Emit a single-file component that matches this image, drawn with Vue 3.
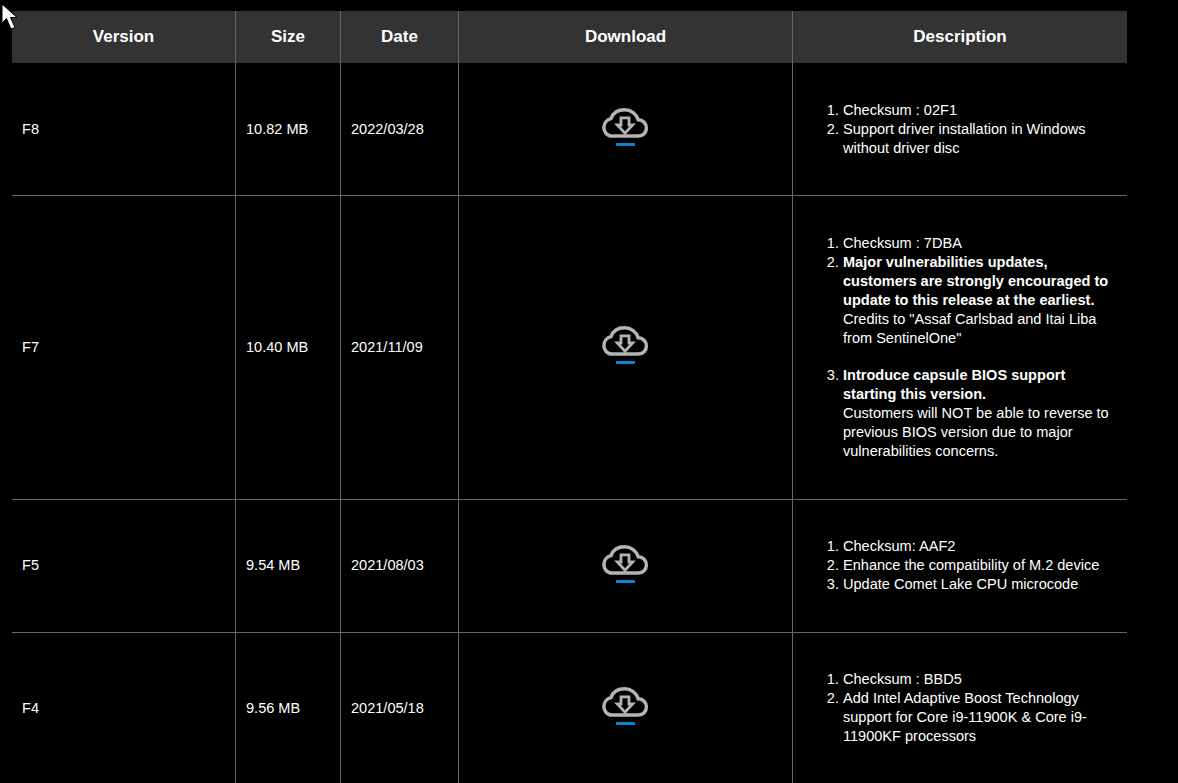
<script setup>
const rows = [
  { v: 'F8', s: '10.82 MB', d: '2022/03/28', k: 'a' },
  { v: 'F7', s: '10.40 MB', d: '2021/11/09', k: 'b' },
  { v: 'F5', s: '9.54 MB', d: '2021/08/03', k: 'c' },
  { v: 'F4', s: '9.56 MB', d: '2021/05/18', k: 'd' }
]
</script>

<template>
  <div class="page">
    <table class="bios">
      <colgroup>
        <col class="c1" /><col class="c2" /><col class="c3" /><col class="c4" /><col class="c5" />
      </colgroup>
      <thead>
        <tr>
          <th>Version</th><th>Size</th><th>Date</th><th>Download</th><th>Description</th>
        </tr>
      </thead>
      <tbody>
        <tr v-for="r in rows" :key="r.v">
          <td>{{ r.v }}</td>
          <td>{{ r.s }}</td>
          <td>{{ r.d }}</td>
          <td>
            <svg class="dl" viewBox="0 0 51 44" width="51" height="44" aria-hidden="true">
              <path d="M12 29 C7 29 3.900 25 3.900 20.800 C3.900 16 7 12.500 11 11.600 C13 6 18 2.800 24.500 2.800 C31 2.800 36.500 7 38.200 12.800 C43 12.800 46.400 16.500 46.400 21 C46.400 25.500 43 29 38.500 29 Z" fill="none" stroke="#b4b4b4" stroke-width="3.500" />
              <path d="M21 10.800 H29 V18 H32.700 L25 26.300 L17.300 18 H21 Z" fill="none" stroke="#b4b4b4" stroke-width="2.800" stroke-linejoin="miter" />
              <rect x="16" y="36" width="19" height="3" fill="#0a85d1" />
            </svg>
          </td>
          <td>
            <ol v-if="r.k === 'a'">
              <li>Checksum : 02F1</li>
              <li>Support driver installation in Windows without driver disc</li>
            </ol>
            <ol v-else-if="r.k === 'b'">
              <li>Checksum : 7DBA</li>
              <li class="gap"><strong>Major vulnerabilities updates, customers are strongly encouraged to update to this release at the earliest.</strong><br />Credits to "Assaf Carlsbad and Itai Liba from SentinelOne"</li>
              <li><strong>Introduce capsule BIOS support starting this version.</strong><br />Customers will NOT be able to reverse to previous BIOS version due to major vulnerabilities concerns.</li>
            </ol>
            <ol v-else-if="r.k === 'c'">
              <li>Checksum: AAF2</li>
              <li>Enhance the compatibility of M.2 device</li>
              <li>Update Comet Lake CPU microcode</li>
            </ol>
            <ol v-else>
              <li>Checksum : BBD5</li>
              <li>Add Intel Adaptive Boost Technology support for Core i9-11900K &amp; Core i9-11900KF processors</li>
            </ol>
          </td>
        </tr>
      </tbody>
    </table>
    <svg class="cursor" viewBox="0 0 20 34" width="20" height="34" aria-hidden="true">
      <path d="M2 4 L2 23 L6.500 18.500 L11 29 L15 27.500 L10.500 17.500 L17 17.500 Z" fill="#fff" stroke="#000" stroke-width="1" />
    </svg>
  </div>
</template>

<style>
html, body { margin: 0; background: #000; overflow: hidden; }
</style>

<style scoped>
.page {
  position: relative;
  height: 783px;
  padding: 11px 0 0 12px;
  box-sizing: border-box;
  overflow: hidden;
  background: #000;
  font-family: "Liberation Sans", Arial, sans-serif;
  color: #fff;
}
.bios {
  width: 1115px;
  table-layout: fixed;
  border-collapse: separate;
  border-spacing: 0;
  font-size: 14.56px;
  line-height: 19px;
}
.c1 { width: 224px; }
.c2 { width: 105px; }
.c3 { width: 118px; }
.c4 { width: 334px; }
.c5 { width: 334px; }
th {
  height: 52px;
  padding: 0 10px 2px;
  background: #333;
  font-size: 17px;
  font-weight: 700;
  text-align: center;
  vertical-align: middle;
  border-right: 1px solid #666;
  box-sizing: border-box;
}
td {
  padding: 37px 10px 38px;
  vertical-align: middle;
  border-right: 1px solid #666;
  border-bottom: 1px solid #666;
}
tbody tr:nth-child(1) td { padding-top: 38px; padding-bottom: 37px; }
tbody tr:nth-child(2) td { padding-top: 38px; padding-bottom: 38px; }
th:last-child, td:last-child { border-right: 0; }
tbody tr td:nth-child(4) { padding-top: 0; padding-bottom: 0; }
.dl { display: block; margin: 0 auto; }
tbody tr:nth-child(2) .dl { margin-top: -2px; }
tbody tr:nth-child(4) .dl { margin-top: -2px; }
ol { margin: 0; padding: 0 0 0 40px; }
.gap { margin-bottom: 18px; }
strong { font-weight: 700; }
.cursor { position: absolute; left: 0; top: 0; }
</style>
